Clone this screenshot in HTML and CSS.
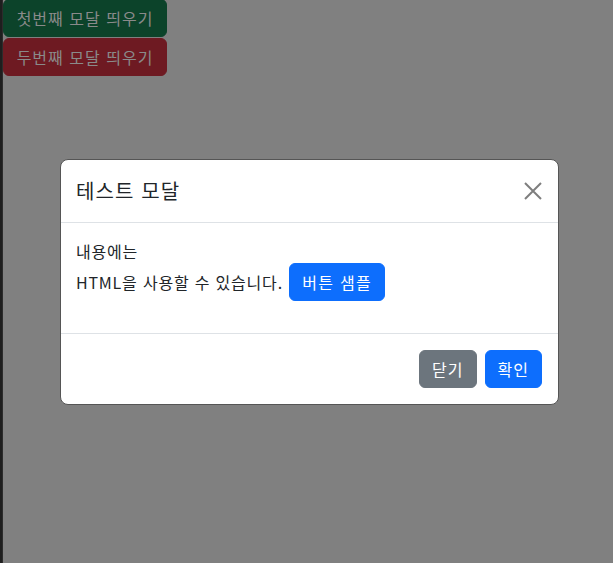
FILE: index.html
```html
<!DOCTYPE html>
<html lang="ko">
<head>
<meta charset="utf-8">
<title>Modal</title>
<link rel="stylesheet" href="styles.css">
</head>
<body>
<div class="page">
  <div class="edge"></div>
  <div class="launchers">
    <button class="btn launch launch-green">첫번째 모달 띄우기</button>
    <button class="btn launch launch-red">두번째 모달 띄우기</button>
  </div>
</div>
<div class="modal">
  <div class="modal-content">
    <div class="modal-header">
      <h5 class="modal-title">테스트 모달</h5>
      <button class="btn-close" aria-label="Close">
        <svg width="18" height="18" viewBox="0 0 18 18"><path d="M1 1L17 17M17 1L1 17" stroke="#000" stroke-width="2" fill="none"/></svg>
      </button>
    </div>
    <div class="modal-body">
      <p class="body-text">내용에는<br>HTML을 사용할 수 있습니다. <button class="btn btn-primary btn-sample">버튼 샘플</button></p>
    </div>
    <div class="modal-footer">
      <button class="btn btn-secondary">닫기</button>
      <button class="btn btn-primary">확인</button>
    </div>
  </div>
</div>
</body>
</html>
```
FILE: styles.css
```css
* { box-sizing: border-box; }
html, body { margin: 0; height: 100%; }
body {
  background: #808080;
  font-family: "Noto Sans CJK KR", "Noto Sans", sans-serif;
  font-size: 16px;
  line-height: 1.5;
  color: #212529;
  overflow: hidden;
}
.page {
  display: flex;
  height: 100%;
}
.edge {
  width: 3px;
  height: 100%;
  background: #1e1e1e;
  border-right: 1px solid #2c2c2c;
  flex: none;
}
.launchers {
  display: flex;
  flex-direction: column;
  align-items: flex-start;
  gap: 1px;
  margin-top: -1px;
}
.btn {
  font-family: inherit;
  font-size: 16px;
  line-height: 24px;
  padding: 6px 12px;
  border: 1px solid transparent;
  border-radius: 6px;
  letter-spacing: 1px;
  cursor: pointer;
}
.launch {
  color: #8a8a8a;
  width: 164px;
  text-align: center;
}
.launch-green { background: #0c432a; border-color: #0c432a; }
.launch-red { background: #6e1a22; border-color: #6e1a22; }

.modal {
  position: fixed;
  inset: 0;
  display: flex;
  align-items: center;
  justify-content: center;
  padding-left: 6px;
}
.modal-content {
  width: 499px;
  background: #fff;
  border: 1px solid #555;
  border-radius: 8px;
  display: flex;
  flex-direction: column;
}
.modal-header {
  display: flex;
  align-items: center;
  justify-content: space-between;
  padding: 16px 16px 16px 15px;
  border-bottom: 1px solid #dee2e6;
}
.modal-title {
  margin: 0;
  font-size: 20px;
  font-weight: 400;
  line-height: 30px;
  letter-spacing: 1.1px;
}
.btn-close {
  width: 32px;
  height: 32px;
  padding: 7px;
  margin: -8px -7px -8px auto;
  background: transparent;
  border: 0;
  opacity: 0.5;
  display: flex;
  align-items: center;
  justify-content: center;
}
.modal-body {
  padding: 16px 16px 16px 15px;
}
.body-text {
  margin: 0 0 16px;
  letter-spacing: 0.8px;
}
.btn-sample { letter-spacing: 1.3px; margin-left: 1px; }
.modal-footer {
  display: flex;
  justify-content: flex-end;
  align-items: center;
  padding: 12px;
  border-top: 1px solid #dee2e6;
}
.modal-footer .btn { margin: 4px; }
.btn-primary { background: #0d6efd; border-color: #0d6efd; color: #fff; }
.btn-secondary { background: #6c757d; border-color: #6c757d; color: #fff; }
```
